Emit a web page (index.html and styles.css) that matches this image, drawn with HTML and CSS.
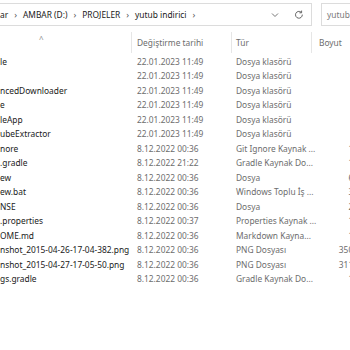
FILE: index.html
```html
<!DOCTYPE html>
<html lang="tr">
<head>
  <meta charset="UTF-8" />
  <title>yutub indirici</title>
  <link rel="stylesheet" href="styles.css">
</head>
<body>
  <div class="toolbar">
    <div class="address">
      <span class="crumb">ar</span><span class="sep">›</span>
      <span class="crumb">AMBAR (D:)</span><span class="sep">›</span>
      <span class="crumb">PROJELER</span><span class="sep">›</span>
      <span class="crumb">yutub indirici</span><span class="sep">›</span>
      <span class="spacer"></span>
      <svg class="chev" width="8" height="6" viewBox="0 0 8 6"><path d="M1 1.5 L4 4.5 L7 1.5" fill="none" stroke="#777" stroke-width="1"/></svg>
      <svg class="refresh" width="10" height="10" viewBox="0 0 10 10"><path d="M8.3 4.6 A3.4 3.4 0 1 1 7.1 2.2" fill="none" stroke="#555" stroke-width="0.9"/><path d="M7.6 0.6 L7.6 2.8 L5.4 2.8" fill="none" stroke="#555" stroke-width="0.9"/></svg>
    </div>
    <div class="search">yutub indirici</div>
  </div>

  <div class="list">
    <div class="row head">
      <div class="cell name"><span class="caret">^</span></div>
      <div class="cell date">Değiştirme tarihi</div>
      <div class="cell type">Tür</div>
      <div class="cell size">Boyut</div>
    </div>
    <div id="rows"></div>
  </div>

  <script>
    const files = [
      ["le", "22.01.2023 11:49", "Dosya klasörü", ""],
      ["", "22.01.2023 11:49", "Dosya klasörü", ""],
      ["ncedDownloader", "22.01.2023 11:49", "Dosya klasörü", ""],
      ["e", "22.01.2023 11:49", "Dosya klasörü", ""],
      ["leApp", "22.01.2023 11:49", "Dosya klasörü", ""],
      ["ubeExtractor", "22.01.2023 11:49", "Dosya klasörü", ""],
      ["nore", "8.12.2022 00:36", "Git Ignore Kaynak ...", "1 KB"],
      [".gradle", "8.12.2022 21:22", "Gradle Kaynak Do...", "1 KB"],
      ["ew", "8.12.2022 00:36", "Dosya", "6 KB"],
      ["ew.bat", "8.12.2022 00:36", "Windows Toplu İş ...", "3 KB"],
      ["NSE", "8.12.2022 00:36", "Dosya", "2 KB"],
      [".properties", "8.12.2022 00:37", "Properties Kaynak ...", "1 KB"],
      ["OME.md", "8.12.2022 00:36", "Markdown Kayna...", "1 KB"],
      ["nshot_2015-04-26-17-04-382.png", "8.12.2022 00:36", "PNG Dosyası", "350 KB"],
      ["nshot_2015-04-27-17-05-50.png", "8.12.2022 00:36", "PNG Dosyası", "311 KB"],
      ["gs.gradle", "8.12.2022 00:36", "Gradle Kaynak Do...", "1 KB"]
    ];

    const rows = document.getElementById("rows");

    files.forEach(f => {
      const row = document.createElement("div");
      row.className = "row";
      ["name", "date", "type", "size"].forEach((cls, i) => {
        const cell = document.createElement("div");
        cell.className = "cell " + cls;
        cell.textContent = f[i];
        row.appendChild(cell);
      });
      rows.appendChild(row);
    });
  </script>
</body>
</html>
```

FILE: styles.css
```css
body {
  margin: 0;
  padding: 0;
  width: 350px;
  height: 350px;
  overflow: hidden;
  background: #fff;
  font-family: "Noto Sans", "Open Sans", sans-serif;
  font-size: 8.4px;
  color: #1a1a1a;
}

.toolbar {
  display: flex;
  gap: 9px;
  padding-top: 3px;
  height: 23px;
}

.address {
  width: 312px;
  flex: none;
  box-sizing: border-box;
  height: 23px;
  border: 1px solid #dcdcdc;
  border-left: none;
  display: flex;
  align-items: center;
  white-space: nowrap;
  font-size: 8.4px;
}

.crumb {
  color: #1a1a1a;
}

.sep {
  color: #555;
  margin: 0 6px;
  font-size: 9px;
}

.spacer {
  flex: 1;
}

.chev {
  margin-right: 15px;
}

.refresh {
  margin-right: 7px;
}

.search {
  flex: 1;
  box-sizing: border-box;
  height: 23px;
  border: 1px solid #dcdcdc;
  border-right: none;
  padding-left: 5px;
  display: flex;
  align-items: center;
  white-space: nowrap;
  overflow: hidden;
  color: #7a7a7a;
  font-size: 8.4px;
}

.list {
  margin-top: 6px;
}

.row {
  display: grid;
  grid-template-columns: 132px 100px 80px 60px;
  height: 14.53px;
  align-items: center;
  white-space: nowrap;
}

.cell {
  overflow: visible;
  box-sizing: border-box;
}

.row.head {
  height: 21px;
  margin-bottom: 1px;
  color: #4a5d78;
}

.row.head .cell {
  height: 21px;
  display: flex;
  align-items: center;
  border-right: 1px solid #e6e6e6;
}

.row.head .cell.size {
  border-right: none;
  padding-left: 7px;
}

.caret {
  color: #8a8a8a;
  font-size: 8px;
  margin-left: 39px;
  align-self: flex-start;
  margin-top: 1px;
}

.date {
  padding-left: 5px;
  color: #6d6d6d;
}

.type {
  padding-left: 4px;
  color: #6d6d6d;
}

.size {
  text-align: right;
  padding-right: 6px;
  color: #6d6d6d;
}

.row .name {
  color: #1a1a1a;
}
```
